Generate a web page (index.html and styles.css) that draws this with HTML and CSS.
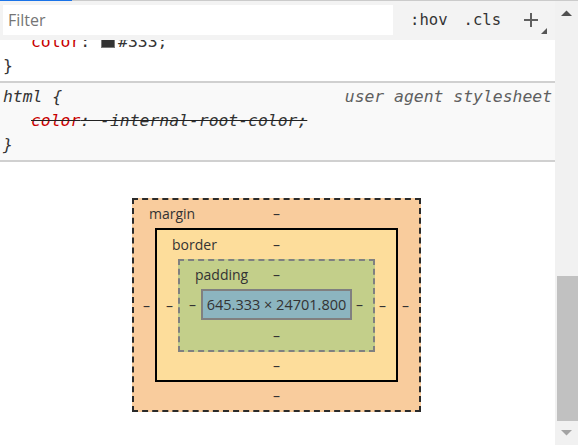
FILE: index.html
```html
<!DOCTYPE html>
<html>
<head>
<meta charset="utf-8">
<link rel="stylesheet" href="styles.css">
</head>
<body>
<div class="app">
  <div class="topline"><div class="topline-active"></div></div>
  <div class="body-row">
    <div class="main">
      <div class="toolbar">
        <input class="filter" type="text" placeholder="Filter">
        <span class="tb-btn hov">:hov</span>
        <span class="tb-btn cls">.cls</span>
        <svg class="tb-plus" width="26" height="30" viewBox="0 0 26 30">
          <path d="M2 15 H16 M9 8 V22" stroke="#5f5f5f" stroke-width="2" fill="none"/>
          <polygon points="25,23 25,29 19,29" fill="#555"/>
        </svg>
      </div>
      <div class="rules">
        <section class="rule rule-first">
          <div class="prop"><span class="name">color</span>: <span class="swatch"></span>#333;</div>
          <div class="close">}</div>
        </section>
        <section class="rule rule-ua">
          <div class="rule-head"><span class="selector">html {</span><span class="origin">user agent stylesheet</span></div>
          <div class="prop"><span class="overridden"><span class="name">color</span>: -internal-root-color;</span></div>
          <div class="close">}</div>
        </section>
      </div>
      <div class="metrics">
        <div class="bm bm-margin">
          <div class="bm-top"><span class="bm-label">margin</span><span class="bm-dash">–</span><span></span></div>
          <div class="bm-mid">
            <span class="bm-side bm-left">–</span>
            <div class="bm bm-border">
              <div class="bm-top"><span class="bm-label">border</span><span class="bm-dash">–</span><span></span></div>
              <div class="bm-mid">
                <span class="bm-side bm-left">–</span>
                <div class="bm bm-padding">
                  <div class="bm-top"><span class="bm-label">padding</span><span class="bm-dash">–</span><span></span></div>
                  <div class="bm-mid">
                    <span class="bm-side bm-left">–</span>
                    <div class="bm-content">645.333 × 24701.800</div>
                    <span class="bm-side bm-right">–</span>
                  </div>
                  <div class="bm-bottom">–</div>
                </div>
                <span class="bm-side bm-right">–</span>
              </div>
              <div class="bm-bottom">–</div>
            </div>
            <span class="bm-side bm-right">–</span>
          </div>
          <div class="bm-bottom">–</div>
        </div>
      </div>
    </div>
    <div class="scrollbar">
      <div class="sb-btn"><svg width="11" height="6" viewBox="0 0 11 6"><polygon points="0,6 5.5,0.5 11,6" fill="#505050"/></svg></div>
      <div class="sb-track"><div class="sb-thumb"></div></div>
      <div class="sb-btn"><svg width="11" height="6" viewBox="0 0 11 6"><polygon points="0,0 11,0 5.5,5.5" fill="#a3a3a3"/></svg></div>
    </div>
  </div>
</div>
</body>
</html>
```
FILE: styles.css
```css
html, body {
  margin: 0;
  padding: 0;
}
body {
  width: 578px;
  height: 445px;
  overflow: hidden;
  background: #fff;
  font-family: "Open Sans", "Noto Sans", sans-serif;
  color: #333;
}
.app {
  display: flex;
  flex-direction: column;
  height: 445px;
}
.topline {
  display: flex;
  flex: none;
  height: 1px;
  background: #cbcbcb;
}
.topline-active {
  width: 72px;
  background: #1a73e8;
}
.body-row {
  display: flex;
  flex: 1;
  min-height: 0;
}
.main {
  flex: 1;
  min-width: 0;
  display: flex;
  flex-direction: column;
}
.toolbar {
  flex: none;
  display: flex;
  align-items: center;
  height: 39px;
  box-sizing: border-box;
  padding: 4px 0 5px 3px;
  background: #f3f3f3;
  position: relative;
  z-index: 1;
}
.filter {
  width: 390px;
  height: 30px;
  box-sizing: border-box;
  border: 0;
  margin: 0;
  padding: 0 0 0 5px;
  background: #fff;
  font-family: "Open Sans", "Noto Sans", sans-serif;
  font-size: 16px;
  color: #333;
  outline: none;
}
.filter::placeholder {
  color: #757575;
}
.tb-btn {
  font-family: "DejaVu Sans Mono", monospace;
  font-size: 15.6px;
  color: #333;
}
.hov {
  margin-left: 17px;
}
.cls {
  margin-left: 16px;
}
.tb-plus {
  margin-left: 21px;
  display: block;
}
.rules {
  flex: none;
  overflow: hidden;
  font-family: "DejaVu Sans Mono", monospace;
  font-size: 16.4px;
  line-height: 24px;
  color: #333;
}
.rule {
  padding-left: 3px;
}
.rule-first {
  margin-top: -10px;
  padding-bottom: 3px;
  background: #fff;
}
.rule-ua {
  background: #f9f9f9;
  border-top: 2px solid #d0d0d0;
  border-bottom: 2px solid #d0d0d0;
  padding-top: 2px;
  padding-bottom: 3px;
  font-style: italic;
}
.rule-head {
  display: flex;
  justify-content: space-between;
  padding-right: 3px;
}
.origin {
  color: #5f5f5f;
}
.prop {
  padding-left: 28px;
  white-space: pre;
}
.name {
  color: #c80000;
}
.overridden {
  text-decoration: line-through;
  text-decoration-color: #222;
}
.swatch {
  display: inline-block;
  width: 14px;
  height: 13px;
  box-sizing: border-box;
  margin: 0 3px 0 1px;
  background: #333;
  border: 1px solid #7a7a7a;
  vertical-align: -1px;
}
.metrics {
  flex: 1;
  display: flex;
  justify-content: center;
  align-items: flex-start;
  padding: 36px 2px 0 0;
  background: #fff;
  font-family: "Open Sans", "Noto Sans", sans-serif;
  font-size: 14px;
  color: #333;
}
.bm {
  display: flex;
  flex-direction: column;
}
.bm-margin {
  border: 2px dashed #2a2a2a;
  background: #f9cc9d;
}
.bm-border {
  border: 2px solid #000;
  background: #fddd9b;
}
.bm-padding {
  border: 2px dashed #808080;
  background: #c3cf8a;
}
.bm-content {
  width: 151px;
  height: 31px;
  box-sizing: border-box;
  border: 2px solid #808080;
  background: #8cb5c0;
  display: flex;
  align-items: center;
  justify-content: center;
  font-size: 14.5px;
  white-space: nowrap;
}
.bm-top {
  display: grid;
  grid-template-columns: 1fr auto 1fr;
  line-height: 28px;
}
.bm-border > .bm-top {
  line-height: 29px;
}
.bm-label {
  padding-left: 15px;
}
.bm-mid {
  display: flex;
  align-items: center;
}
.bm-side {
  width: 21px;
  box-sizing: border-box;
  flex: none;
}
.bm-left {
  text-align: right;
  padding-right: 5px;
}
.bm-right {
  text-align: left;
  padding-left: 4px;
}
.bm-bottom {
  text-align: center;
  line-height: 27px;
  padding-bottom: 1px;
}
.bm-padding > .bm-bottom {
  padding-top: 2px;
}
.scrollbar {
  flex: none;
  width: 23px;
  background: #f1f1f1;
  display: flex;
  flex-direction: column;
}
.sb-btn {
  flex: none;
  height: 24px;
  display: flex;
  align-items: center;
  justify-content: center;
}
.sb-btn svg {
  display: block;
}
.sb-track {
  flex: 1;
  padding-left: 2px;
}
.sb-thumb {
  margin-top: 251px;
  height: 145px;
  background: #c1c1c1;
}
```
